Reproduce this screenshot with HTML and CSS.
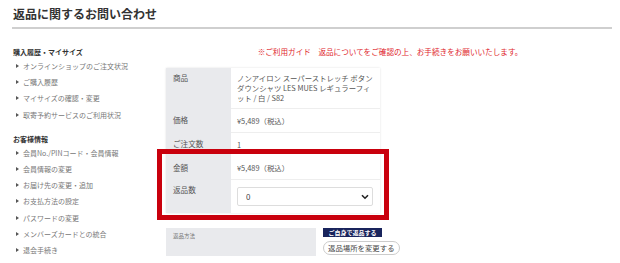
FILE: index.html
```html
<!DOCTYPE html>
<html lang="ja">
<head>
    <meta charset="UTF-8" />
    <meta name="viewport" content="width=device-width, initial-scale=1" />
    <title>返品に関するお問い合わせ</title>
    <link rel="stylesheet" href="styles.css">
</head>
<body>
    <div class="page">
        <h1 class="title">返品に関するお問い合わせ</h1>

        <div class="layout">
            <nav class="side">
                <div class="side-group">
                    <h2>購入履歴・マイサイズ</h2>
                    <ul>
                        <li>オンラインショップのご注文状況</li>
                        <li>ご購入履歴</li>
                        <li>マイサイズの確認・変更</li>
                        <li>取寄予約サービスのご利用状況</li>
                    </ul>
                </div>
                <div class="side-group">
                    <h2>お客様情報</h2>
                    <ul>
                        <li>会員No./PINコード・会員情報</li>
                        <li>会員情報の変更</li>
                        <li>お届け先の変更・追加</li>
                        <li>お支払方法の設定</li>
                        <li>パスワードの変更</li>
                        <li>メンバーズカードとの統合</li>
                        <li>退会手続き</li>
                    </ul>
                </div>
            </nav>

            <main class="main">
                <p class="notice">※ご利用ガイド　返品についてをご確認の上、お手続きをお願いいたします。</p>

                <div class="info">
                    <div class="row">
                        <div class="label">商品</div>
                        <div class="value">ノンアイロン スーパーストレッチ ボタンダウンシャツ LES MUES レギュラーフィット / 白 / S82</div>
                    </div>
                    <div class="row">
                        <div class="label">価格</div>
                        <div class="value">¥5,489（税込）</div>
                    </div>
                    <div class="row">
                        <div class="label">ご注文数</div>
                        <div class="value">1</div>
                    </div>
                    <div class="highlight">
                        <div class="row">
                            <div class="label">金額</div>
                            <div class="value">¥5,489（税込）</div>
                        </div>
                        <div class="row row-select">
                            <div class="label">返品数</div>
                            <div class="value">
                                <div class="select-wrap">
                                    <select class="qty">
                                        <option>0</option>
                                        <option>1</option>
                                    </select>
                                    <svg class="chevron" width="8" height="6" viewBox="0 0 8 6">
                                        <path d="M1 1.2 L4 4.2 L7 1.2" fill="none" stroke="#222" stroke-width="1.6" />
                                    </svg>
                                </div>
                            </div>
                        </div>
                    </div>
                </div>

                <div class="method">
                    <div class="method-box">返品方法</div>
                    <div class="method-actions">
                        <span class="tag">ご自身で返品する</span>
                        <button class="pill">返品場所を変更する</button>
                    </div>
                </div>
            </main>
        </div>
    </div>
</body>
</html>
```

FILE: styles.css
```css
body {
    margin: 0;
    background: #fff;
    font-family: "Noto Sans CJK JP", "Noto Sans", sans-serif;
    color: #333;
}

.page {
    padding: 4px 8px 0 12px;
}

.title {
    margin: 0;
    font-size: 12px;
    font-weight: bold;
    line-height: 20px;
    padding: 0 0 3px 1px;
    color: #333;
    border-bottom: 2px solid #cfcfcf;
}

.layout {
    display: flex;
}

/* sidebar */
.side {
    width: 154px;
    flex-shrink: 0;
    padding-top: 18px;
}

.side-group + .side-group {
    margin-top: 11px;
}

.side h2 {
    margin: 0 0 1px 1px;
    height: 10px;
    font-size: 7px;
    line-height: 10px;
    font-weight: bold;
    color: #333;
}

.side ul {
    list-style: none;
    margin: 0;
    padding: 0 0 0 4px;
}

.side li {
    display: flex;
    align-items: center;
    gap: 4px;
    height: 16.2px;
    font-size: 7px;
    color: #777;
    white-space: nowrap;
}

.side li::before {
    content: "";
    border-left: 3px solid #555;
    border-top: 2px solid transparent;
    border-bottom: 2px solid transparent;
}

/* main column */
.main {
    flex: 1;
}

.notice {
    margin: 18px 0 11px;
    font-size: 7.6px;
    line-height: 10px;
    color: #e0262c;
    text-align: center;
    padding-left: 2px;
}

.info {
    width: 214px;
    box-shadow: 0 0 2px rgba(0, 0, 0, 0.12);
}

.row {
    display: flex;
}

.label {
    width: 65px;
    flex-shrink: 0;
    background: #e9eaed;
    padding: 7px 7px 6px;
    box-sizing: border-box;
    font-size: 7.6px;
    line-height: 10px;
    color: #555;
}

.value {
    flex: 1;
    padding: 7px 7px 6px 6px;
    font-size: 7.4px;
    line-height: 10px;
    color: #555;
    border-top: 1px solid #eee;
}

.row:first-child .value {
    border-top: none;
}

.info > .row:first-child .label,
.info > .row:first-child .value {
    padding-top: 5px;
    padding-bottom: 5px;
}

.highlight {
    position: relative;
}

.highlight::after {
    content: "";
    position: absolute;
    top: -7px;
    bottom: -7px;
    left: -9px;
    right: -9px;
    border: 5px solid #c9000d;
    pointer-events: none;
}

.row-select .label {
    padding-top: 6px;
}

.row-select .value {
    padding: 7px 7px 7px 6px;
}

.select-wrap {
    position: relative;
}

.qty {
    appearance: none;
    -webkit-appearance: none;
    display: block;
    width: 100%;
    height: 19px;
    margin: 0;
    padding: 0 0 0 8px;
    border: 1px solid #ddd;
    border-radius: 2px;
    background: #fff;
    font-family: inherit;
    font-size: 8px;
    color: #444;
}

.chevron {
    position: absolute;
    right: 4px;
    top: 7px;
}

/* return method */
.method {
    display: flex;
    margin-top: 15px;
    gap: 7px;
}

.method-box {
    width: 150px;
    height: 28px;
    box-sizing: border-box;
    padding: 4px 7px;
    background: #e9eaed;
    font-size: 5.5px;
    line-height: 8px;
    color: #777;
}

.method-actions {
    display: flex;
    flex-direction: column;
    align-items: flex-start;
    gap: 4px;
}

.tag {
    display: block;
    height: 9px;
    width: 59px;
    background: #19245c;
    color: #fff;
    font-size: 6px;
    font-weight: bold;
    line-height: 9px;
    text-align: center;
}

.pill {
    height: 14px;
    padding: 0 4px;
    border: 1px solid #ccc;
    border-radius: 7px;
    background: #fff;
    font-family: inherit;
    font-size: 7.4px;
    line-height: 12px;
    color: #444;
    cursor: pointer;
}
```
